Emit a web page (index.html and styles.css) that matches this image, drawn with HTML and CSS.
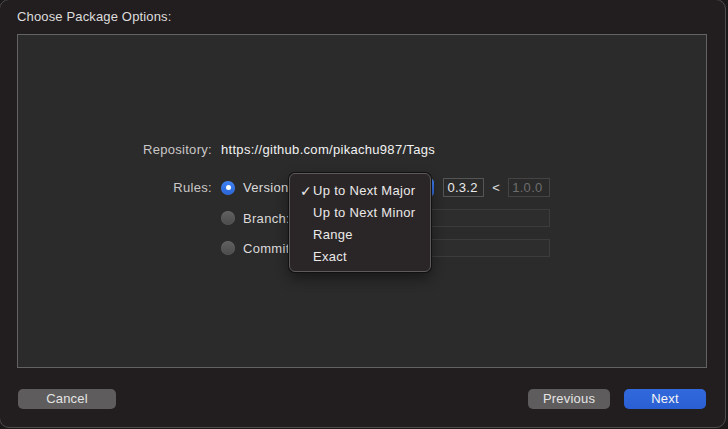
FILE: index.html
```html
<!DOCTYPE html>
<html lang="en">
<head>
    <meta charset="UTF-8">
    <title>Choose Package Options</title>
    <link rel="stylesheet" href="styles.css">
</head>
<body>
    <div class="window">
        <div class="sheet-title">Choose Package Options:</div>

        <div class="panel">
            <div class="form">
                <div class="form-label">Repository:</div>
                <div class="repo-url">https://github.com/pikachu987/Tags</div>

                <div class="form-label rules-label">Rules:</div>
                <div class="rules">
                    <div class="radio checked"></div>
                    <div class="rule-name">Version</div>
                    <div class="rule-control">
                        <div class="popup">
                            <span class="popup-arrows"></span>
                            <div class="menu">
                                <div class="menu-item"><span class="check">✓</span>Up to Next Major</div>
                                <div class="menu-item">Up to Next Minor</div>
                                <div class="menu-item">Range</div>
                                <div class="menu-item">Exact</div>
                            </div>
                        </div>
                        <div class="field version-field lower">0.3.2</div>
                        <span class="lt">&lt;</span>
                        <div class="field version-field disabled">1.0.0</div>
                    </div>

                    <div class="radio"></div>
                    <div class="rule-name">Branch:</div>
                    <div class="field wide-field"></div>

                    <div class="radio"></div>
                    <div class="rule-name">Commit:</div>
                    <div class="field wide-field"></div>
                </div>
            </div>
        </div>

        <div class="footer">
            <div class="button cancel">Cancel</div>
            <div class="footer-right">
                <div class="button">Previous</div>
                <div class="button primary">Next</div>
            </div>
        </div>
    </div>
</body>
</html>
```

FILE: styles.css
```css
* {
    margin: 0;
    padding: 0;
    box-sizing: border-box;
    font-family: 'Liberation Sans', Arial, sans-serif;
}

body {
    background-color: #1b1819;
    width: 728px;
    height: 429px;
    overflow: hidden;
}

.window {
    width: 727px;
    height: 429px;
    margin: -1px 0 0 -1px;
    border: 1px solid #4f4c4d;
    border-radius: 10px;
    background-color: #221e1f;
    display: flex;
    flex-direction: column;
    padding: 0 18px 0 17px;
}

.sheet-title {
    padding-top: 9px;
    height: 34px;
    font-size: 13px;
    line-height: 16px;
    letter-spacing: 0.15px;
    color: #dedcdc;
}

.panel {
    flex: 1;
    background-color: #2b2b2b;
    border: 1px solid #636363;
    display: flex;
    align-items: flex-start;
    padding-top: 106px;
}

.form {
    display: grid;
    grid-template-columns: 194px auto;
    column-gap: 9px;
    row-gap: 19px;
    font-size: 13px;
    letter-spacing: 0.3px;
}

.form-label {
    text-align: right;
    color: #c9c7c7;
    line-height: 18px;
}

.rules-label {
    line-height: 19px;
}

.repo-url {
    color: #f2f2f2;
    line-height: 18px;
}

.rules {
    display: grid;
    grid-template-columns: 14px 49px 250px;
    grid-template-rows: 19px 18px 18px;
    column-gap: 8px;
    row-gap: 12px;
    align-items: center;
}

.radio {
    width: 14px;
    height: 14px;
    border-radius: 50%;
    background: linear-gradient(#626162, #4d4c4d);
    box-shadow: inset 0 0 0 0.5px rgba(255, 255, 255, 0.08);
}

.radio.checked {
    background: linear-gradient(#3f82f5, #2a63d8);
    position: relative;
}

.radio.checked::after {
    content: '';
    position: absolute;
    left: 4.5px;
    top: 4.5px;
    width: 5px;
    height: 5px;
    border-radius: 50%;
    background-color: #fff;
}

.rule-name {
    color: #dcdada;
    line-height: 19px;
    white-space: nowrap;
}

.rule-control {
    display: flex;
    align-items: center;
}

.popup {
    position: relative;
    width: 135px;
    height: 19px;
    border-radius: 5px;
    background-color: #5c5a5b;
    display: flex;
    justify-content: flex-end;
    margin-right: 9px;
}

.popup-arrows {
    width: 16px;
    height: 19px;
    border-radius: 0 5px 5px 0;
    background: linear-gradient(#3e80f3, #2c63d6);
}

.menu {
    position: absolute;
    left: -11px;
    top: -5px;
    width: 142px;
    height: 99px;
    padding-top: 6px;
    background-color: #2a2526;
    border: 1px solid #5e5a5b;
    border-radius: 6px;
    box-shadow: 0 0 0 1px #111, 0 6px 14px rgba(0, 0, 0, 0.45);
    z-index: 10;
}

.menu-item {
    position: relative;
    height: 22px;
    line-height: 22px;
    padding-left: 23px;
    color: #ebe9e9;
    font-size: 13px;
}

.check {
    position: absolute;
    left: 10px;
    top: 0;
    font-size: 14px;
    font-weight: bold;
    font-family: 'DejaVu Sans', sans-serif;
}

.field {
    height: 19px;
    background-color: #2a2a2a;
    border: 1px solid #555;
    color: #eaeaea;
    line-height: 17px;
    padding-left: 3px;
    font-size: 13px;
}

.version-field {
    width: 41px;
}

.version-field.lower {
    margin-right: 8px;
}

.version-field.disabled {
    width: 42px;
    border-color: #444;
    color: #6d6d6d;
}

.lt {
    color: #e0e0e0;
    margin-right: 8px;
    width: 8px;
    text-align: center;
}

.wide-field {
    width: 250px;
    height: 18px;
    background-color: #2d2d2d;
    border-color: #3c3c3c;
}

.footer {
    height: 59px;
    padding: 21px 1px 18px 1px;
    display: flex;
    justify-content: space-between;
}

.footer-right {
    display: flex;
    gap: 14px;
}

.button {
    width: 82px;
    height: 20px;
    border-radius: 5px;
    background-color: #5e5c5d;
    color: #e4e4e4;
    font-size: 13px;
    line-height: 20px;
    letter-spacing: 0.2px;
    text-align: center;
}

.button.cancel {
    width: 98px;
}

.button.primary {
    background: linear-gradient(#3169dd, #2a5fd3);
    color: #f4f4f4;
}
```
